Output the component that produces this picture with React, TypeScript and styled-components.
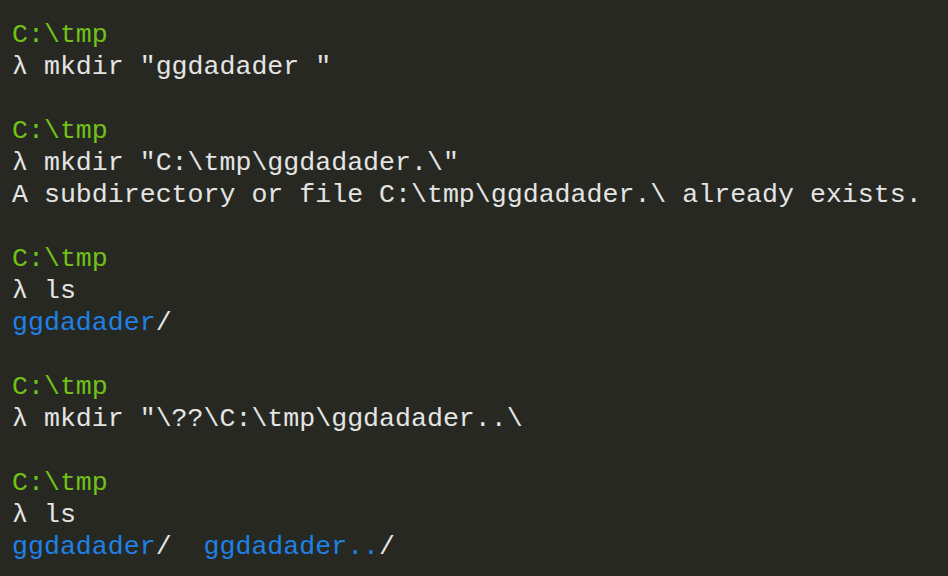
import React from "react";
import styled, { createGlobalStyle } from "styled-components";

const Global = createGlobalStyle`
  html, body {
    margin: 0;
    padding: 0;
    background: #272822;
  }
`;

const Terminal = styled.div`
  width: 948px;
  height: 576px;
  box-sizing: border-box;
  padding: 19px 0 0 12px;
  background: #272822;
  overflow: hidden;
  font-family: "Liberation Mono", "DejaVu Sans Mono", monospace;
  font-size: 26.6px;
  line-height: 32px;
  color: #e4e4e4;
  display: flex;
  flex-direction: column;
`;

const Line = styled.div`
  white-space: pre;
  height: 32px;
`;

type Tone = "path" | "dir" | "text";

const Seg = styled.span<{ $tone: Tone }>`
  color: ${(p) =>
    p.$tone === "path" ? "#71c11a" : p.$tone === "dir" ? "#1f80e6" : "#e4e4e4"};
`;

const Prompt = ({ cmd }: { cmd: string }) => (
  <>
    <Line>
      <Seg $tone="path">C:\tmp</Seg>
    </Line>
    <Line>
      <Seg $tone="text">λ {cmd}</Seg>
    </Line>
  </>
);

export default function App() {
  return (
    <>
      <Global />
      <Terminal>
        <Prompt cmd={'mkdir "ggdadader "'} />
        <Line />
        <Prompt cmd={'mkdir "C:\\tmp\\ggdadader.\\"'} />
        <Line>
          <Seg $tone="text">A subdirectory or file C:\tmp\ggdadader.\ already exists.</Seg>
        </Line>
        <Line />
        <Prompt cmd="ls" />
        <Line>
          <Seg $tone="dir">ggdadader</Seg>
          <Seg $tone="text">/</Seg>
        </Line>
        <Line />
        <Prompt cmd={'mkdir "\\??\\C:\\tmp\\ggdadader..\\'} />
        <Line />
        <Prompt cmd="ls" />
        <Line>
          <Seg $tone="dir">ggdadader</Seg>
          <Seg $tone="text">/  </Seg>
          <Seg $tone="dir">ggdadader..</Seg>
          <Seg $tone="text">/</Seg>
        </Line>
      </Terminal>
    </>
  );
}
